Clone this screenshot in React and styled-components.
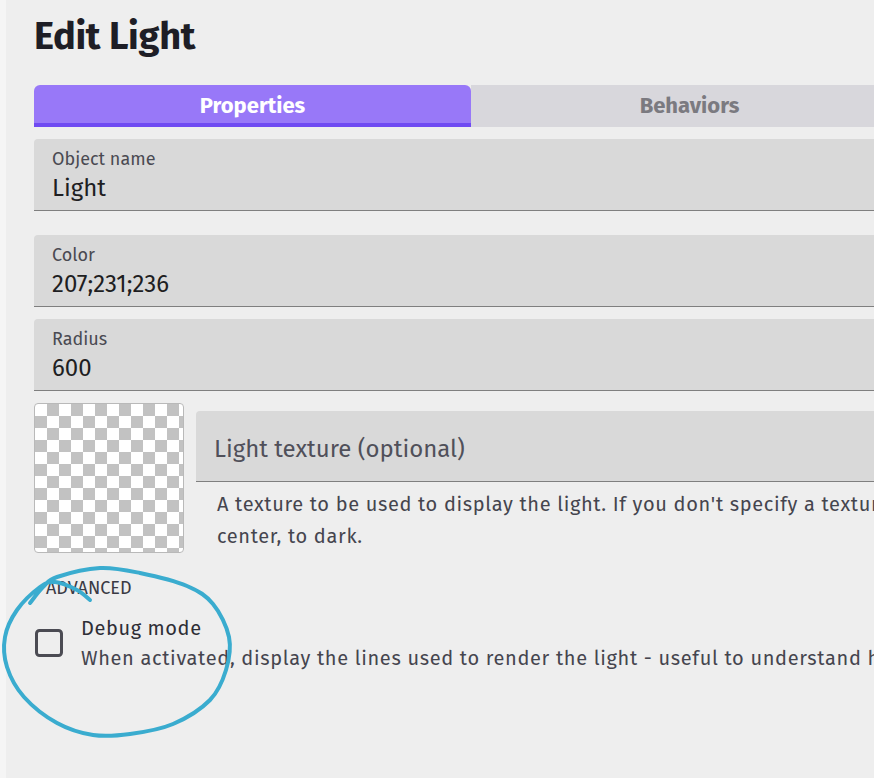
import React from "react";
import styled, { createGlobalStyle } from "styled-components";

const FONT = `"Fira Sans", "Noto Sans", "Open Sans", sans-serif`;

const Global = createGlobalStyle`
  html, body { margin: 0; padding: 0; background: #f5f5f5; overflow: hidden; }
  body { font-family: ${FONT}; }
  * { box-sizing: border-box; }
`;

const Page = styled.div`
  position: relative;
  width: 874px;
  height: 778px;
  overflow: hidden;
  padding-left: 6px;
`;

const Panel = styled.div`
  background: #eeeeee;
  height: 100%;
  padding: 14px 0 0 28px;
  width: 910px;
`;

const Title = styled.h1`
  margin: 0;
  font-family: ${FONT};
  font-weight: 700;
  font-size: 38px;
  line-height: 44px;
  color: #1e1e26;
  letter-spacing: -0.3px;
`;

const Tabs = styled.div`
  display: flex;
  width: 874px;
  margin-top: 27px;
`;

const Tab = styled.div`
  flex: 1;
  height: 42px;
  display: flex;
  align-items: center;
  justify-content: center;
  font-weight: 700;
  font-size: 22px;
  background: ${(p) => (p.$active ? "#9878f8" : "#d8d7dc")};
  color: ${(p) => (p.$active ? "#ffffff" : "#7b7a80")};
  border-bottom: 4px solid ${(p) => (p.$active ? "#6f4af2" : "#d8d7dc")};
  border-radius: ${(p) => (p.$active ? "6px 6px 0 0" : "0")};
  padding-top: 3px;
`;

const Field = styled.div`
  width: 874px;
  background: #d9d9d9;
  border-bottom: 1px solid #7f7f7f;
  border-radius: 4px 4px 0 0;
  padding: 10px 18px 8px;
  margin-top: ${(p) => p.$mt}px;
`;

const Label = styled.div`
  font-size: 18px;
  line-height: 20px;
  color: #4a4a52;
`;

const Value = styled.div`
  margin-top: 5px;
  font-size: 24px;
  line-height: 28px;
  color: #1e1e22;
`;

const TextureRow = styled.div`
  display: flex;
  gap: 12px;
  margin-top: 12px;
`;

const Checker = styled.div`
  flex: none;
  width: 150px;
  height: 150px;
  border: 1px solid #b9b9b9;
  border-radius: 4px;
  background-color: #ffffff;
  background-image:
    linear-gradient(45deg, #c2c2c2 25%, transparent 25%, transparent 75%, #c2c2c2 75%),
    linear-gradient(45deg, #c2c2c2 25%, transparent 25%, transparent 75%, #c2c2c2 75%);
  background-size: 24px 24px;
  background-position: 0 0, 12px 12px;
`;

const TextureCol = styled.div`
  flex: 1;
  margin-top: 8px;
`;

const TextureField = styled.div`
  background: #d9d9d9;
  border-bottom: 1px solid #7f7f7f;
  border-radius: 4px 4px 0 0;
  height: 71px;
  padding: 24px 18px 0;
  font-size: 24px;
  line-height: 28px;
  color: #50505a;
`;

const Helper = styled.div`
  padding: 6px 0 0 21px;
  font-size: 20px;
  line-height: 32px;
  color: #45454e;
  letter-spacing: 0.65px;
  white-space: nowrap;
`;

const Section = styled.div`
  margin-top: 25px;
  padding-left: 12px;
  font-size: 18px;
  line-height: 20px;
  color: #3a3a44;
`;

const CheckRow = styled.div`
  display: flex;
  align-items: flex-start;
  gap: 17px;
  margin-top: 15px;
`;

const CheckBox = styled.svg`
  flex: none;
  margin-top: 15px;
`;

const CheckText = styled.div`
  display: flex;
  flex-direction: column;
`;

const CheckTitle = styled.div`
  font-size: 20px;
  line-height: 30px;
  color: #2e2e36;
  letter-spacing: 0.6px;
`;

const CheckDesc = styled.div`
  font-size: 20px;
  line-height: 30px;
  color: #45454e;
  letter-spacing: 0.66px;
  white-space: nowrap;
`;

const Annotation = styled.svg`
  position: absolute;
  left: 0;
  top: 0;
  pointer-events: none;
`;

const pts = [
  [30, 603], [43, 587], [57, 577], [100, 568], [140, 573], [187, 586],
  [213, 604], [229, 637], [226, 670], [210, 700], [173, 724], [130, 734],
  [93, 735], [57, 723], [24, 697], [7, 667], [5, 637], [17, 610],
  [40, 587], [55, 582], [77, 590], [90, 600],
];

function smoothPath(p) {
  let d = `M${p[0][0]},${p[0][1]}`;
  for (let i = 0; i < p.length - 1; i++) {
    const p0 = p[i - 1] || p[i];
    const p1 = p[i];
    const p2 = p[i + 1];
    const p3 = p[i + 2] || p2;
    const c1 = [p1[0] + (p2[0] - p0[0]) / 6, p1[1] + (p2[1] - p0[1]) / 6];
    const c2 = [p2[0] - (p3[0] - p1[0]) / 6, p2[1] - (p3[1] - p1[1]) / 6];
    d += ` C${c1[0].toFixed(1)},${c1[1].toFixed(1)} ${c2[0].toFixed(1)},${c2[1].toFixed(1)} ${p2[0]},${p2[1]}`;
  }
  return d;
}

export default function App() {
  return (
    <>
      <Global />
      <Page>
        <Panel>
          <Title>Edit Light</Title>
          <Tabs>
            <Tab $active>Properties</Tab>
            <Tab>Behaviors</Tab>
          </Tabs>
          <Field $mt={12}>
            <Label>Object name</Label>
            <Value>Light</Value>
          </Field>
          <Field $mt={24}>
            <Label>Color</Label>
            <Value>207;231;236</Value>
          </Field>
          <Field $mt={12}>
            <Label>Radius</Label>
            <Value>600</Value>
          </Field>
          <TextureRow>
            <Checker />
            <TextureCol>
              <TextureField>Light texture (optional)</TextureField>
              <Helper>
                <div>
                  A texture to be used to display the light. If you don't specify a texture, the light is rendered as fading from bright, in its
                </div>
                <div>center, to dark.</div>
              </Helper>
            </TextureCol>
          </TextureRow>
          <Section>ADVANCED</Section>
          <CheckRow>
            <CheckBox width="30" height="30" viewBox="0 0 30 30">
              <rect x="2.5" y="2.5" width="25" height="25" rx="3" fill="none" stroke="#4b4b53" strokeWidth="3" />
            </CheckBox>
            <CheckText>
              <CheckTitle>Debug mode</CheckTitle>
              <CheckDesc>
                When activated, display the lines used to render the light - useful to understand how the light is rendered on screen.
              </CheckDesc>
            </CheckText>
          </CheckRow>
        </Panel>
        <Annotation width="874" height="778" viewBox="0 0 874 778">
          <path d={smoothPath(pts)} fill="none" stroke="#3aaccf" strokeWidth="4" strokeLinecap="round" strokeLinejoin="round" />
        </Annotation>
      </Page>
    </>
  );
}
